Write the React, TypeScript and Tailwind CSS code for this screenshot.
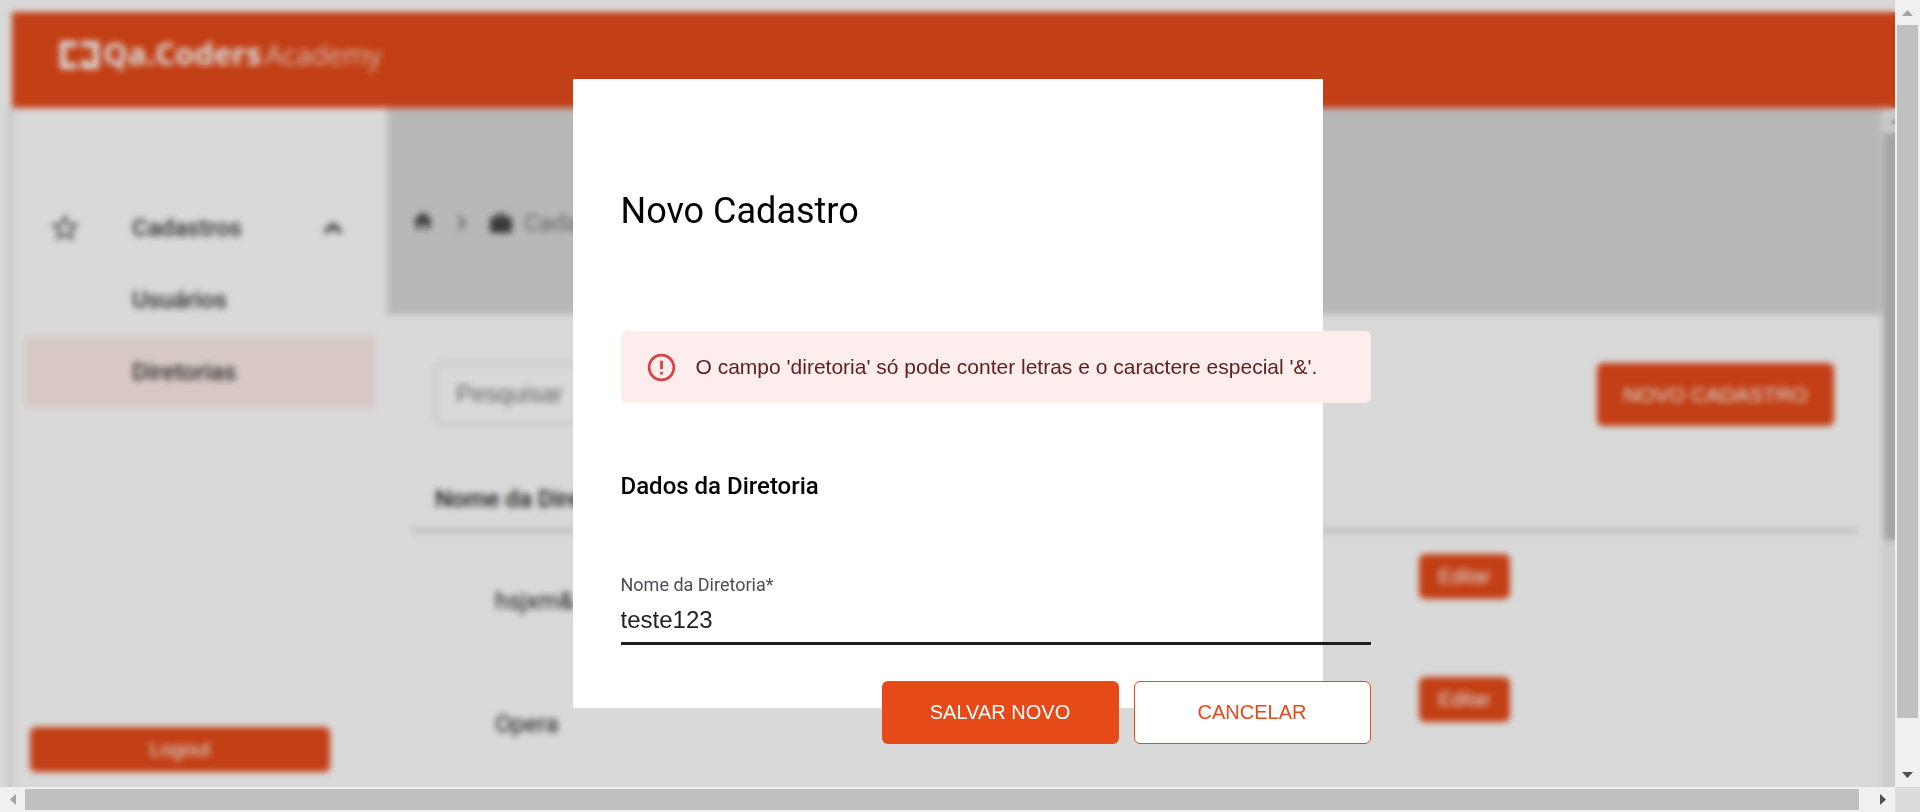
import { useState } from "react";
import { MdStarBorder, MdHome, MdErrorOutline } from "react-icons/md";

const SANS = "font-['Liberation_Sans',Arial,sans-serif]";
const ROBOTO = "font-['Roboto',sans-serif]";

function Triangle({ points, className, size }: { points: string; className: string; size: string }) {
  return (
    <svg viewBox={size} className={className} aria-hidden="true">
      <polygon points={points} fill="currentColor" />
    </svg>
  );
}

function LogoMark() {
  return (
    <svg viewBox="0 0 40 28" className="h-7 w-10" fill="currentColor" aria-hidden="true">
      <path d="M0 0H17V6H6V22H17V28H0Z" />
      <path d="M21 0H39V28H21V22L24 17L30 22H33V6H21Z" />
    </svg>
  );
}

function BriefcaseIcon() {
  return (
    <svg viewBox="0 0 22 20" className="h-5 w-[22px]" fill="currentColor" aria-hidden="true">
      <path
        fillRule="evenodd"
        d="M6 4V3a3 3 0 0 1 3-3h4a3 3 0 0 1 3 3v1h3a3 3 0 0 1 3 3v10a3 3 0 0 1-3 3H3a3 3 0 0 1-3-3V7a3 3 0 0 1 3-3Zm2 0h6V2.500H8Z"
      />
    </svg>
  );
}

function ChevronUpIcon() {
  return (
    <svg viewBox="0 0 20 12" className="h-3 w-5" fill="none" stroke="currentColor" strokeWidth="4" aria-hidden="true">
      <path d="M2 10.500L10 2.800L18 10.500" />
    </svg>
  );
}

function ChevronRightIcon() {
  return (
    <svg viewBox="0 0 10 16" className="h-4 w-[10px]" fill="none" stroke="currentColor" strokeWidth="3" aria-hidden="true">
      <path d="M1.500 1.500L8 8L1.500 14.500" />
    </svg>
  );
}

function Header() {
  return (
    <header className="flex h-24 shrink-0 items-start bg-[#e64a19] pl-12 pt-[29px] text-white">
      <LogoMark />
      <div className="ml-[3px] flex items-baseline gap-1 text-[28px] leading-6">
        <span className="font-['Open_Sans',sans-serif] text-[31px] font-bold">Qa.Coders</span>
        <span className="font-['Noto_Sans',sans-serif] font-light">Academy</span>
      </div>
    </header>
  );
}

function Sidebar() {
  return (
    <aside className="flex w-[375px] shrink-0 flex-col shadow-[-3px_0_0_#dcdcdc]">
      <nav className={`mt-[84px] flex flex-col px-3 text-2xl font-medium text-[#3a3a3a] ${ROBOTO}`}>
        <button type="button" className="flex h-[72px] items-center pl-6 pr-8 text-left">
          <MdStarBorder className="size-[34px] text-[#555]" />
          <span className="ml-[50px] flex-1">Cadastros</span>
          <ChevronUpIcon />
        </button>
        <a href="#usuarios" className="flex h-[72px] items-center pl-[108px]">
          Usuários
        </a>
        <a href="#diretorias" className="flex h-[72px] items-center rounded bg-[#fdece7] pl-[108px]">
          Diretorias
        </a>
      </nav>
      <button
        type="button"
        className={`mb-[15px] ml-[18px] mt-auto h-[45px] w-[300px] rounded-md bg-[#e64a19] pb-0.5 text-xl text-white ${SANS}`}
      >
        Logout
      </button>
    </aside>
  );
}

const rows = ["hsjxm&", "Opera"];

function Content() {
  return (
    <main className="min-w-0 flex-1">
      <div className={`flex h-[207px] items-center bg-[#d9d9d9] pt-[22px] pl-6 text-2xl text-[#777] ${ROBOTO}`}>
        <MdHome className="mb-1 size-6 text-[#444]" />
        <span className="ml-[22px]">
          <ChevronRightIcon />
        </span>
        <span className="ml-[23px] text-[#444]">
          <BriefcaseIcon />
        </span>
        <span className="ml-3">Cadastro</span>
      </div>
      <div className={`flex items-start justify-between px-12 pt-12 ${SANS}`}>
        <input
          type="search"
          aria-label="Pesquisar"
          placeholder="Pesquisar"
          className="h-[61px] w-[450px] rounded-md border border-[#bbb] bg-white px-5 text-2xl placeholder:text-[#777]"
        />
        <button type="button" className="h-[63px] w-[237px] rounded-md bg-[#e64a19] text-[21px] text-white">
          NOVO CADASTRO
        </button>
      </div>
      <div className="px-6 pt-10">
        <table className={`w-full table-fixed border-separate border-spacing-0 text-2xl text-[#222] ${ROBOTO}`}>
          <thead>
            <tr>
              <th className="h-[66px] w-[660px] border-b-[3px] border-[#ccc] pl-6 pt-0.5 text-left font-medium">
                Nome da Diretoria
              </th>
              <th aria-label="Ações" className="border-b-[3px] border-[#ccc]" />
            </tr>
          </thead>
          <tbody>
            {rows.map((name) => (
              <tr key={name} className="h-[123px] align-top">
                <td className="pl-[84px] pt-[55px] leading-7">{name}</td>
                <td className="pt-[22px] text-center">
                  <button
                    type="button"
                    className={`mx-auto block h-[45px] w-[91px] rounded-md bg-[#e64a19] pb-0.5 text-xl text-white ${SANS}`}
                  >
                    Editar
                  </button>
                </td>
              </tr>
            ))}
          </tbody>
        </table>
      </div>
    </main>
  );
}

function InnerScrollbar() {
  return (
    <div className="flex w-[25px] shrink-0 flex-col items-center bg-[#f0f0f0]" aria-hidden="true">
      <div className="flex h-[25px] items-center">
        <Triangle size="0 0 12 6" points="0,6 6,0 12,6" className="h-[6px] w-3 text-[#a3a3a3]" />
      </div>
      <div className="h-[60%] w-[21px] bg-[#c0c0c0]" />
    </div>
  );
}

function NewRecordDialog() {
  const [name, setName] = useState("teste123");
  return (
    <div
      role="dialog"
      aria-modal="true"
      aria-labelledby="dialog-title"
      className="h-[629px] w-[750px] shrink-0 bg-white pl-12"
    >
      <form className="w-[750px] pt-[108px]" onSubmit={(e) => e.preventDefault()}>
        <h1 id="dialog-title" className={`text-4xl leading-12 text-black ${ROBOTO}`}>
          Novo Cadastro
        </h1>
        <div
          role="alert"
          className={`mt-24 flex h-[72px] items-center rounded-md bg-[#fdeded] pl-6 text-[21px] text-[#5f2120] ${SANS}`}
        >
          <MdErrorOutline className="size-[33px] text-[#d94343]" />
          <span className="ml-[18px]">O campo 'diretoria' só pode conter letras e o caractere especial '&'.</span>
        </div>
        <h2 className={`mt-[67px] text-2xl font-medium text-black ${ROBOTO}`}>Dados da Diretoria</h2>
        <label htmlFor="diretoria" className={`mt-[71px] block text-lg leading-6 text-[#4e4b59] ${ROBOTO}`}>
          Nome da Diretoria*
        </label>
        <input
          id="diretoria"
          value={name}
          onChange={(e) => setName(e.target.value)}
          className={`block h-12 w-full border-b-[3px] border-[#1c1f1f] bg-transparent text-2xl text-[#212121] outline-none ${SANS}`}
        />
        <div className={`mt-9 flex justify-end gap-[15px] text-xl ${SANS}`}>
          <button type="submit" className="h-[63px] w-[237px] rounded-md bg-[#e64a19] pb-0.5 text-white">
            SALVAR NOVO
          </button>
          <button
            type="button"
            className="h-[63px] w-[237px] rounded-md border border-[#e64a19] bg-white pb-0.5 text-[#e64a19]"
          >
            CANCELAR
          </button>
        </div>
      </form>
    </div>
  );
}

function VerticalScrollbar() {
  return (
    <div className="flex flex-col items-center bg-[#f0f0f0]" aria-hidden="true">
      <div className="flex h-[25px] shrink-0 items-center">
        <Triangle size="0 0 11 6" points="0,6 5.5,0 11,6" className="h-[6px] w-[11px] text-[#a3a3a3]" />
      </div>
      <div className="flex w-[21px] flex-1 flex-col">
        <div className="h-[94%] bg-[#c0c0c0]" />
      </div>
      <div className="flex h-[25px] shrink-0 items-center">
        <Triangle size="0 0 11 6" points="0,0 11,0 5.5,6" className="h-[6px] w-[11px] text-[#505050]" />
      </div>
    </div>
  );
}

function HorizontalScrollbar() {
  return (
    <div className="flex items-center bg-[#f0f0f0]" aria-hidden="true">
      <div className="flex w-[25px] shrink-0 justify-center">
        <Triangle size="0 0 6 11" points="6,0 0,5.5 6,11" className="h-[11px] w-[6px] text-[#a3a3a3]" />
      </div>
      <div className="flex h-[21px] flex-1">
        <div className="w-[99.4%] bg-[#c0c0c0]" />
      </div>
      <div className="flex w-[25px] shrink-0 justify-center">
        <Triangle size="0 0 6 11" points="0,0 6,5.5 0,11" className="h-[11px] w-[6px] text-[#505050]" />
      </div>
    </div>
  );
}

export default function App() {
  return (
    <div className="grid h-screen grid-cols-[minmax(0,1fr)_25px] grid-rows-[minmax(0,1fr)_25px] overflow-hidden bg-white">
      <div className="relative overflow-hidden">
        <div className="-mr-3 ml-3 flex h-full flex-col pt-3">
          <Header />
          <div className="flex min-h-0 flex-1">
            <Sidebar />
            <Content />
            <InnerScrollbar />
          </div>
        </div>
        <div className="absolute inset-0 flex items-center justify-center bg-black/15 backdrop-blur-[3px]">
          <NewRecordDialog />
        </div>
      </div>
      <VerticalScrollbar />
      <HorizontalScrollbar />
      <div className="bg-[#dcdcdc]" />
    </div>
  );
}
